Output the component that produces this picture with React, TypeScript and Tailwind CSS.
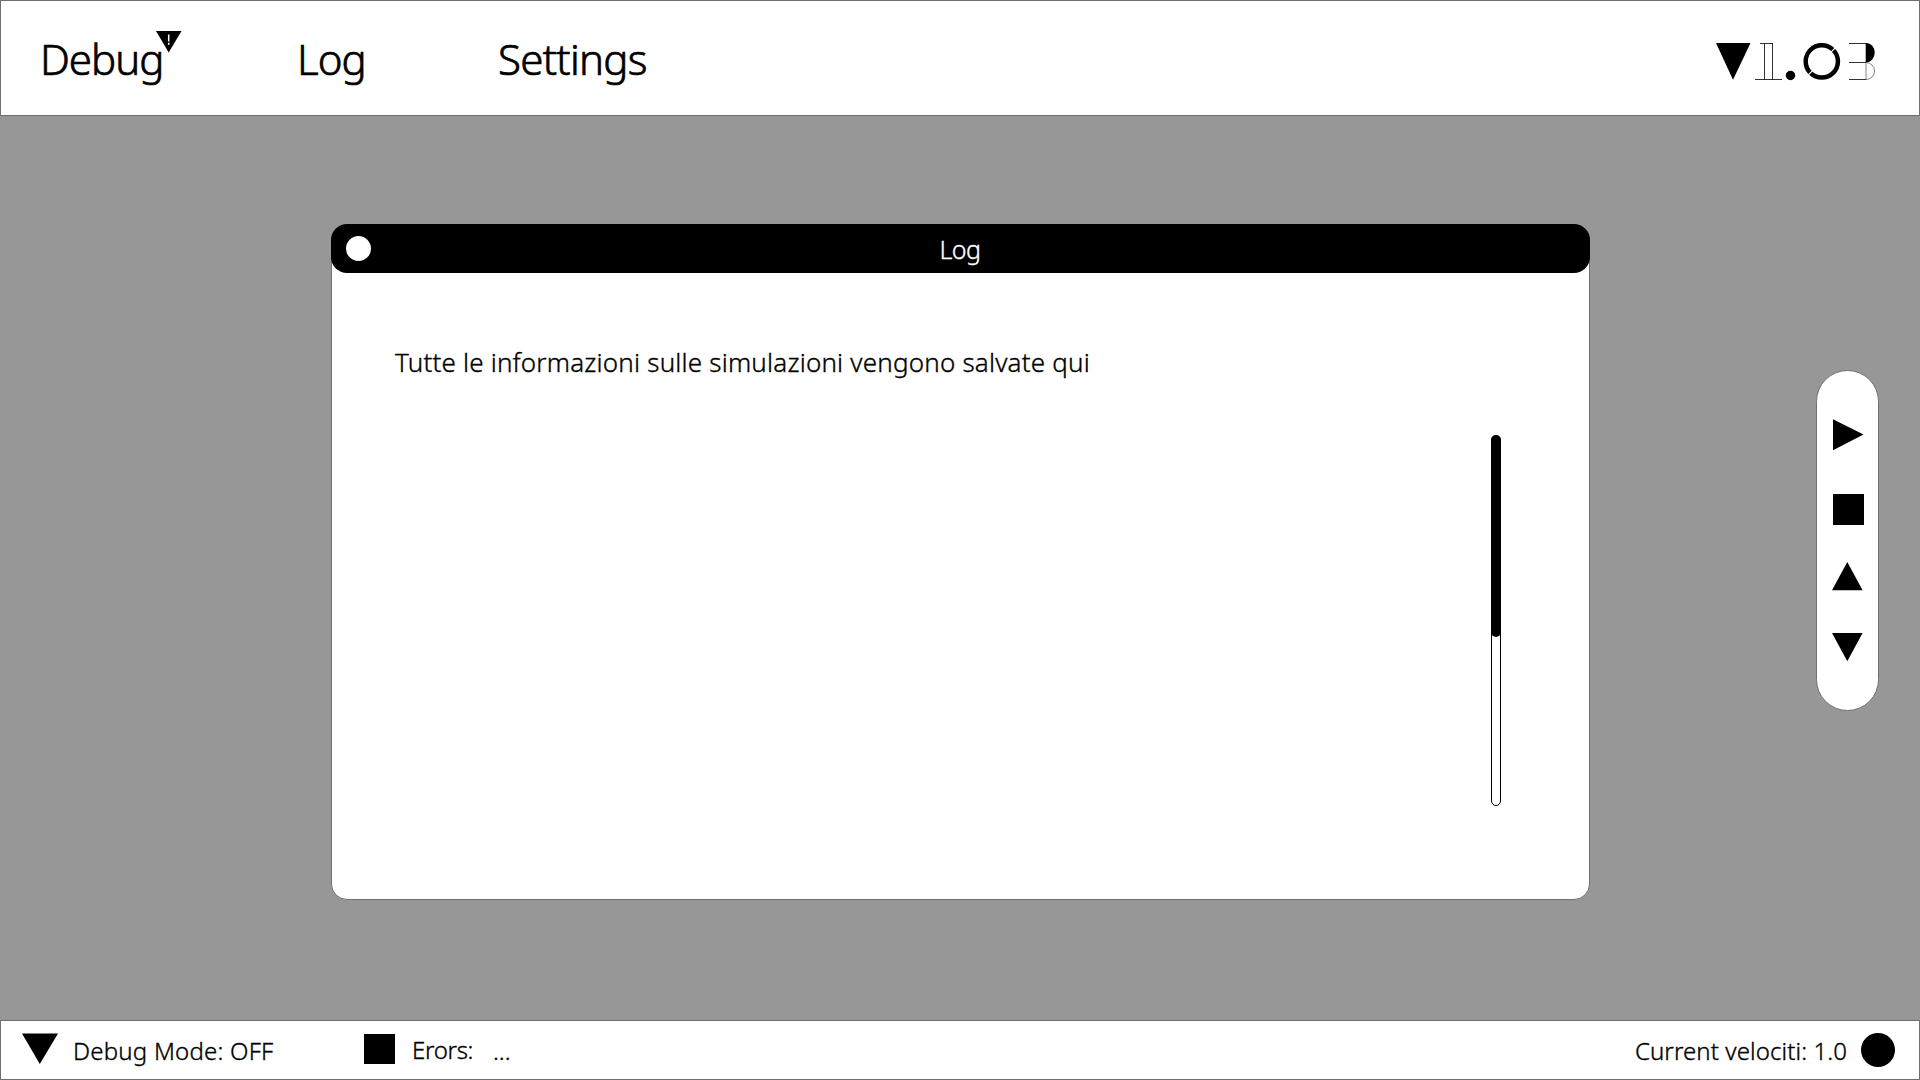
function VersionLogo() {
  return (
    <svg width="170" height="40" viewBox="0 0 170 40" fill="none" stroke="#000" role="img" aria-label="V1.03">
      <polygon points="6,1 40.5,1 23,37.8" fill="#000" stroke="none" />
      <g strokeWidth="1" strokeOpacity="0.8">
        <line x1="50" y1="1.5" x2="63" y2="1.5" />
        <line x1="54.5" y1="1.5" x2="54.5" y2="37.5" />
        <line x1="62.5" y1="1.5" x2="62.5" y2="37.5" />
        <line x1="45" y1="37.5" x2="72" y2="37.5" />
        <line x1="139" y1="1.5" x2="156" y2="1.5" />
        <line x1="139" y1="20.5" x2="156" y2="20.5" />
        <line x1="139" y1="37.5" x2="156" y2="37.5" />
      </g>
      <circle cx="80.5" cy="33.5" r="4.7" fill="#000" stroke="none" />
      <circle cx="111.8" cy="19.4" r="16.1" strokeWidth="4.5" />
      <g stroke="#fff" strokeWidth="1.2">
        <line x1="121" y1="10.2" x2="126.5" y2="4.7" />
        <line x1="97" y1="34.2" x2="102.6" y2="28.6" />
      </g>
      <path d="M155.7 1h.8a8.2 9.6 0 0 1 0 19.2h-.8z" fill="#000" stroke="none" />
      <path d="M156 20.5a8.6 8.5 0 0 1 0 17z" strokeWidth="0.8" strokeOpacity="0.6" />
    </svg>
  );
}

export default function App() {
  return (
    <div className="flex h-[1080px] w-[1920px] flex-col overflow-hidden bg-[#979797] font-['Noto_Sans',sans-serif] font-light text-black [-webkit-text-stroke:0.35px]">
      <header className="flex h-[116px] shrink-0 items-start justify-between border border-[#707070] bg-white pr-[39px] pl-[39px]">
        <nav className="flex pt-[28px] text-[42px] leading-[60px] tracking-[-1px] whitespace-nowrap [-webkit-text-stroke:0.7px]">
          <a className="relative block w-[257px]">
            <span>Debug</span>
            <svg className="absolute top-0.5 left-[116px]" width="26" height="22" viewBox="0 0 26 22">
              <polygon points="0,0 25.5,0 12.7,21.5" fill="#000" />
              <path d="M12.7 3.5v7M12.7 11.8v2" stroke="#fff" strokeWidth="1.5" />
            </svg>
          </a>
          <a className="block w-[201px]">Log</a>
          <a className="block tracking-[-0.7px]">Settings</a>
        </nav>
        <div className="pt-[41px]">
          <VersionLogo />
        </div>
      </header>

      <main className="flex min-h-0 flex-1 items-start">
        <section className="mt-[108px] ml-[331px] flex h-[676px] w-[1259px] flex-col rounded-2xl border border-[#707070] bg-white">
          <div className="-mx-px -mt-px grid h-[49px] shrink-0 grid-cols-[1fr_auto_1fr] items-start rounded-2xl bg-black pl-[15px] text-white">
            <button className="mt-3 size-[25px] rounded-full bg-white" aria-label="Close" />
            <h1 className="mt-[7px] -ml-[16px] text-[25px] leading-9 tracking-[-0.5px]">Log</h1>
          </div>
          <p className="mt-[69px] ml-[63px] text-[26px] leading-10 tracking-[0.19px] whitespace-nowrap">
            Tutte le informazioni sulle simulazioni vengono salvate qui
          </p>
          <div className="mt-[53px] mr-[88px] h-[371px] w-[10px] self-end rounded-full border border-black">
            <div className="-mx-px -mt-px h-[202px] rounded-full bg-black" />
          </div>
        </section>

        <aside className="mt-[254px] ml-[226px] flex h-[341px] w-[63px] flex-col items-start rounded-full border border-[#707070] bg-white pl-[15px]">
          <svg className="mt-12" width="32" height="32" viewBox="0 0 32 32">
            <polygon points="1,0.3 31.5,15.6 1,31.2" />
          </svg>
          <div className="mt-[43px] ml-px size-[31px] bg-black" />
          <svg className="mt-9" width="32" height="30" viewBox="0 0 32 30">
            <polygon points="0,29.3 15.3,1 30.6,29.3" />
          </svg>
          <svg className="mt-[42px]" width="32" height="29" viewBox="0 0 32 29">
            <polygon points="0,0 30.6,0 15.3,28.3" />
          </svg>
        </aside>
      </main>

      <footer className="flex h-[60px] shrink-0 items-start border border-[#707070] bg-white pl-[21px] text-[24px] leading-9 whitespace-nowrap">
        <svg className="mt-3" width="36" height="32" viewBox="0 0 36 32">
          <polygon points="0,0.4 36,0.4 17.8,31" />
        </svg>
        <span className="mt-[11.5px] ml-[15px] w-[291px] tracking-[0.22px]">Debug Mode: OFF</span>
        <div className="mt-[13px] h-[30px] w-[31px] bg-black" />
        <span className="mt-[11px] ml-[17px] w-[81px] tracking-[-0.3px]">Erors:</span>
        <span className="mt-[11.5px]">...</span>
        <span className="mt-[11.5px] mr-[14px] ml-auto tracking-[0.1px]">Current velociti: 1.0</span>
        <div className="mt-3 mr-6 size-[34px] rounded-full bg-black" />
      </footer>
    </div>
  );
}
